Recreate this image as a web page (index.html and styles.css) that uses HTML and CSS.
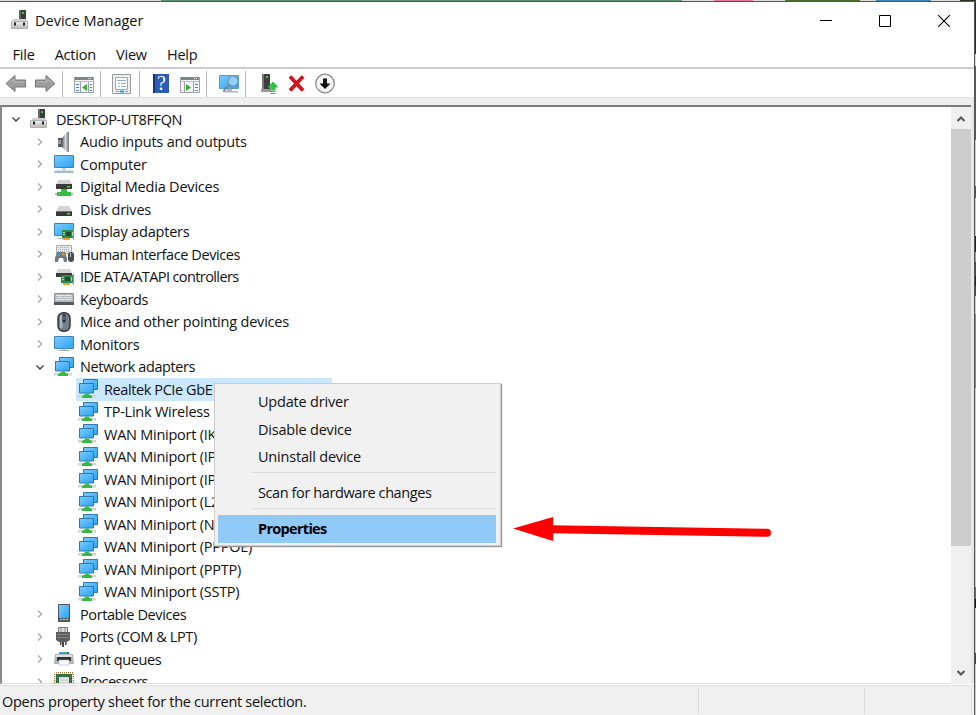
FILE: index.html
```
<!DOCTYPE html>
<html lang="en">

<head>
    <meta charset="UTF-8">
    <title>Device Manager</title>
    <link rel="stylesheet" href="styles.css">
</head>

<body>
    <!-- icon set -->
    <svg class="defs" width="0" height="0">
        <defs>
            <linearGradient id="blue" x1="0" y1="0" x2="1" y2="1">
                <stop offset="0" stop-color="#7ccbff" />
                <stop offset="1" stop-color="#2ba3f5" />
            </linearGradient>
            <linearGradient id="grey" x1="0" y1="0" x2="0" y2="1">
                <stop offset="0" stop-color="#eeeeee" />
                <stop offset="1" stop-color="#b9b9b9" />
            </linearGradient>
            <linearGradient id="metal" x1="0" y1="0" x2="1" y2="0">
                <stop offset="0" stop-color="#606468" />
                <stop offset=".5" stop-color="#d6d9dc" />
                <stop offset="1" stop-color="#74787c" />
            </linearGradient>
        </defs>
        <symbol id="i-root" viewBox="0 0 20 20">
            <path d="M9 0h7v10H9z" fill="#3c3c3c" />
            <path d="M9 0h2v10H9z" fill="#666" />
            <path d="M12 2h2v2h-2z" fill="#35d435" />
            <path d="M4 9h12l2 3H2z" fill="#d0d0d0" />
            <path d="M1.500 11.500h16v7h-16z" fill="url(#grey)" stroke="#b0b0b0" />
            <path d="M4 12.500h2v3H4zM13 12.500h2v3h-2z" fill="#222" />
        </symbol>
        <symbol id="i-audio" viewBox="0 0 20 20">
            <path d="M4 6h4v9H4z" fill="#55585c" />
            <path d="M8 6l5-6h2v20h-2l-5-5z" fill="url(#metal)" />
            <path d="M4 8h3v4H4z" fill="#95989b" />
        </symbol>
        <symbol id="i-computer" viewBox="0 0 20 20">
            <path d="M.500 1.500h19v12H.500z" fill="url(#blue)" stroke="#3f86b5" />
            <path d="M8 14h4v2H8z" fill="#c9d4dc" />
            <path d="M1 16h18l1 3H0z" fill="#a5bccc" />
            <path d="M1 16h18v1H1z" fill="#d4e0e8" />
        </symbol>
        <symbol id="i-media" viewBox="0 0 20 20">
            <path d="M4 3h12l2 4H2z" fill="#d4d4d4" />
            <path d="M2 7h16v5H2z" fill="#3b3b3b" />
            <path d="M13 9h3v1.500h-3z" fill="#3fe03f" />
            <path d="M7 12h6v3h4v4H3v-4h4z" fill="#39bd45" />
            <path d="M1 16h2v2H1zM17 16h2v2h-2z" fill="#b9bdb9" />
        </symbol>
        <symbol id="i-disk" viewBox="0 0 20 20">
            <path d="M5 7h10l3 5H2z" fill="#d6d6d6" />
            <path d="M2 12h16v5H2z" fill="#393939" />
            <path d="M2 12h16v1H2z" fill="#777" />
            <path d="M13 14h3v1.500h-3z" fill="#3fe03f" />
        </symbol>
        <symbol id="i-display" viewBox="0 0 20 20">
            <path d="M.500 1.500h19v12H.500z" fill="url(#blue)" stroke="#3f86b5" />
            <path d="M4 16h5v1H4z" fill="#a5bccc" />
            <path d="M8 8h12v8H8z" fill="#2f8a50" />
            <path d="M12 10h5v4h-5z" fill="#1d5032" />
            <path d="M9 10h2v1H9zM9 12h2v1H9zM18 10h1v4h-1z" fill="#a8d8a0" />
            <path d="M9 16h7v2H9z" fill="#f2a51c" />
            <path d="M19 7h1v11h-1z" fill="#9a9a9a" />
        </symbol>
        <symbol id="i-hid" viewBox="0 0 20 20">
            <path d="M2.500 1.500h15v8h-15z" fill="#e4e6e8" stroke="#a8adb1" />
            <path d="M4 3.500h12M4 5.500h12M4 7.500h12" stroke="#a8aeb3" stroke-dasharray="1 1" />
            <path d="M3 8h8l2 6v4h-3l-1-4H5l-1 4H1v-4z" fill="#737a80" />
            <path d="M3 10h2v2H3z" fill="#2ba3ff" />
            <path d="M8 9h2.500v2.500H8z" fill="#f08a24" />
            <rect x="14" y="8" width="6" height="10" rx="3" fill="#474c51" />
            <path d="M16.500 9v4" stroke="#b7c0c7" />
        </symbol>
        <symbol id="i-ide" viewBox="0 0 20 20">
            <path d="M4 2h12l2 4H2z" fill="#d6d6d6" />
            <path d="M2 6h16v4H2z" fill="#3b3b3b" />
            <path d="M7 8h12v8H7z" fill="#2f8a50" />
            <path d="M11 10h5v4h-5z" fill="#1d5032" />
            <path d="M8 10h2v1H8zM8 12h2v1H8zM17 10h1v4h-1z" fill="#a8d8a0" />
            <path d="M9 16h7v2H9z" fill="#f2a51c" />
            <path d="M19 7h1v11h-1z" fill="#9a9a9a" />
        </symbol>
        <symbol id="i-keyboard" viewBox="0 0 20 20">
            <path d="M.500 4.500h19v9H.500z" fill="#b4b8bc" stroke="#8a8e92" />
            <path d="M2 6.500h16M3 8.500h15M2 10.500h16" stroke="#fff" stroke-dasharray="1.500 .8" />
            <path d="M0 13h20v3H0z" fill="#55595e" />
        </symbol>
        <symbol id="i-mouse" viewBox="0 0 20 20">
            <rect x="4" y=".700" width="12" height="18.600" rx="5.500" fill="#75808b" stroke="#2d3136" stroke-width="1.400" />
            <rect x="6" y="3" width="2.500" height="13" rx="1.200" fill="#a9b5c1" />
            <rect x="8.500" y="2.500" width="3" height="8" rx="1" fill="#26292d" />
            <path d="M10 4v4" stroke="#8c98a5" />
        </symbol>
        <symbol id="i-monitor" viewBox="0 0 20 20">
            <path d="M.500 2.500h19v12H.500z" fill="url(#blue)" stroke="#3f86b5" />
            <path d="M8 15h4v1H8z" fill="#c9d2d8" />
            <path d="M5 16h10v1H5z" fill="#9aa9b3" />
        </symbol>
        <symbol id="i-net" viewBox="0 0 20 20">
            <path d="M5.500.500h14v10h-14z" fill="url(#blue)" stroke="#2f78a8" />
            <path d="M1.500 4.500h14v9.500h-14z" fill="url(#blue)" stroke="#2f78a8" />
            <path d="M0 16h18v2.500H0z" fill="#d3d5d3" />
            <path d="M7 14.500h4v1l3 1.500v2H4v-2l3-1.500z" fill="#35b944" />
        </symbol>
        <symbol id="i-portable" viewBox="0 0 20 20">
            <path d="M4.500.500h11v17h-11z" fill="#565d66" stroke="#4c545c" />
            <path d="M5 1h10v13H5z" fill="url(#blue)" />
            <path d="M6 15.500h8" stroke="#c5cbd0" stroke-dasharray="2 1" />
        </symbol>
        <symbol id="i-port" viewBox="0 0 20 20">
            <path d="M4.500.500h9v5h-9z" fill="#dedede" stroke="#777" />
            <path d="M7 1v4M11 1v4" stroke="#8a8a8a" />
            <path d="M2 5h14v8l-3 2H5l-3-2z" fill="#5e5e5e" />
            <path d="M3 7.500h12M3 10.500h12" stroke="#858585" />
            <path d="M6 15h1.500v3H6zM8 15h2v5H8zM11 15h1.500v3H11z" fill="#444" />
        </symbol>
        <symbol id="i-print" viewBox="0 0 20 20">
            <path d="M5 3h10v3H5z" fill="#3c9de0" />
            <path d="M9 3h3v3H9z" fill="#39bd45" />
            <path d="M13 3h2v3h-2z" fill="#1f64b8" />
            <path d="M1 5h18l1 10H0z" fill="#b3b6b9" />
            <path d="M2 6h16v2H2z" fill="#e0e2e3" />
            <path d="M3 8h14v4H3z" fill="#303234" />
            <path d="M5 11h10v5H5z" fill="#fff" stroke="#aaa" stroke-width=".600" />
        </symbol>
        <symbol id="i-cpu" viewBox="0 0 20 20">
            <path d="M2 .700h17M.700 2v17M19.300 2v17" stroke="#a67e3c" stroke-width="1.400" stroke-dasharray="1 1" />
            <path d="M2 2h16v17H2z" fill="#35704c" />
            <path d="M5 5h10v14H5z" fill="#d9dddd" />
        </symbol>
    </svg>

    <div class="desktop">
        <div class="strip-top"></div>
        <div class="window">
            <div class="titlebar">
                <svg class="icon"><use href="#i-root" /></svg>
                <span class="title">Device Manager</span>
                <div class="controls">
                    <svg width="14" height="14"><path d="M1 6.500h12" stroke="#000" /></svg>
                    <svg width="14" height="14"><path d="M1.500 1.500h11v11h-11z" fill="none" stroke="#000" /></svg>
                    <svg width="14" height="14"><path d="M1.200 1.200l11.600 11.600M12.800 1.200L1.200 12.800" stroke="#000" stroke-width="1.100" /></svg>
                </div>
            </div>

            <div class="menubar">
                <span>File</span>
                <span>Action</span>
                <span>View</span>
                <span>Help</span>
            </div>

            <div class="toolbar">
                <svg class="tool" viewBox="0 0 22 22">
                    <path d="M1 10.500l9-8v4.500h10.500v7H10v4.500z" fill="#9c9c9c" stroke="#777" />
                    <path d="M4 10l5-4v3h10" fill="none" stroke="#bbb" />
                </svg>
                <svg class="tool" viewBox="0 0 22 22">
                    <path d="M21 10.500l-9-8v4.500H1.500v7H12v4.500z" fill="#9c9c9c" stroke="#777" />
                    <path d="M3 9h10V6l5 4" fill="none" stroke="#bbb" />
                </svg>
                <span class="sep"></span>
                <svg class="tool" viewBox="0 0 22 22">
                    <path d="M1.500 4.500h19v15h-19z" fill="#f6f6f6" stroke="#9ba1a7" />
                    <path d="M2 4h18v3H2z" fill="#7d858c" />
                    <path d="M15 5.500h4" stroke="#fff" stroke-dasharray="1 1" />
                    <path d="M2 8.500h18" stroke="#bbc0c4" />
                    <path d="M7.500 9v10M15.500 9v10" stroke="#9ba1a7" />
                    <path d="M3 11.500h3M3 14.500h3M3 17.500h3M17 11.500h2M17 14.500h2M17 17.500h2" stroke="#5682aa" />
                    <path d="M14 11v7l-5-3.500z" fill="#3dae3d" />
                </svg>
                <span class="sep"></span>
                <svg class="tool" viewBox="0 0 22 22">
                    <path d="M1.500 1.500h18v19h-18z" fill="#f0f0f0" stroke="#9a9a9a" />
                    <path d="M4.500 4.500h12v12h-12z" fill="#fff" stroke="#9ca8b2" />
                    <path d="M6 7.500h9M7 10.500h2M10 10.500h5M7 13.500h2M10 13.500h5" stroke="#8cb4d4" />
                    <path d="M5 18.500h3M14 18.500h3" stroke="#999" />
                    <path d="M9 18.500h4" stroke="#2a9be6" stroke-width="2" />
                </svg>
                <span class="sep"></span>
                <svg class="tool" viewBox="0 0 22 22">
                    <path d="M3 1h16v19H3z" fill="#2b5cb8" />
                    <path d="M3 1h2v19H3z" fill="#17356f" />
                    <text class="help-mark" x="7" y="17">?</text>
                </svg>
                <svg class="tool" viewBox="0 0 22 22">
                    <path d="M1.500 4.500h19v15h-19z" fill="#f6f6f6" stroke="#9ba1a7" />
                    <path d="M2 4h18v3H2z" fill="#7d858c" />
                    <path d="M15 5.500h4" stroke="#fff" stroke-dasharray="1 1" />
                    <path d="M2 8.500h18" stroke="#bbc0c4" />
                    <path d="M5.500 9v10M14.500 9v10" stroke="#9ba1a7" />
                    <path d="M16 11.500h3M16 14.500h3M16 17.500h3" stroke="#5682aa" />
                    <path d="M7 11v7l5-3.500z" fill="#3dae3d" />
                </svg>
                <span class="sep"></span>
                <svg class="tool" viewBox="0 0 22 22">
                    <path d="M2.500 2.500h19v13h-19z" fill="url(#blue)" stroke="#5c9cc5" />
                    <path d="M10 16h5v2h-5zM6 18h15v1.500H6z" fill="#a9b9c5" />
                    <circle cx="16" cy="8" r="5" fill="#8fd2fb" stroke="#7898ad" stroke-width="1.300" />
                    <path d="M12.500 12l-6 6" stroke="#70889a" stroke-width="2" />
                </svg>
                <span class="sep"></span>
                <div class="tool-group">
                    <svg class="tool" viewBox="0 0 22 22">
                        <path d="M4 1h8v15H4z" fill="#3d3d3d" />
                        <path d="M4 1h2v15H4z" fill="#777" />
                        <path d="M8 3h2v2H8z" fill="#37d137" />
                        <path d="M3 16h10v3H3z" fill="#999" />
                        <path d="M9.500 14.500l5.500-6 5.500 6h-3v3h-5v-3zM12.500 18h5v1h-5zM12.500 20h5v1h-5z" fill="#2ac43a" />
                    </svg>
                    <svg class="tool" viewBox="0 0 22 22">
                        <path d="M4 3.500l13 14M17 3.500l-13 14" stroke="#d9121c" stroke-width="3.800" />
                    </svg>
                    <svg class="tool" viewBox="0 0 22 22">
                        <circle cx="11" cy="10.500" r="9.300" fill="#f7f7f7" stroke="#8a8a8a" stroke-width="1.300" />
                        <path d="M9 5.500h4v5h3.500L11 16l-5.500-5.500H9z" fill="#111" />
                    </svg>
                </div>
            </div>

            <div class="content">
                <div class="tree">
                    <div class="row root"><svg class="chev open"><path d="M1.500 3.500L5 7l3.500-3.500" /></svg><svg class="icon"><use href="#i-root" /></svg><span class="snug">DESKTOP-UT8FFQN</span></div>
                    <div class="row"><svg class="chev"><path d="M3 1.500L6.500 5 3 8.500" /></svg><svg class="icon"><use href="#i-audio" /></svg><span>Audio inputs and outputs</span></div>
                    <div class="row"><svg class="chev"><path d="M3 1.500L6.500 5 3 8.500" /></svg><svg class="icon"><use href="#i-computer" /></svg><span>Computer</span></div>
                    <div class="row"><svg class="chev"><path d="M3 1.500L6.500 5 3 8.500" /></svg><svg class="icon"><use href="#i-media" /></svg><span>Digital Media Devices</span></div>
                    <div class="row"><svg class="chev"><path d="M3 1.500L6.500 5 3 8.500" /></svg><svg class="icon"><use href="#i-disk" /></svg><span>Disk drives</span></div>
                    <div class="row"><svg class="chev"><path d="M3 1.500L6.500 5 3 8.500" /></svg><svg class="icon"><use href="#i-display" /></svg><span>Display adapters</span></div>
                    <div class="row"><svg class="chev"><path d="M3 1.500L6.500 5 3 8.500" /></svg><svg class="icon"><use href="#i-hid" /></svg><span class="snug">Human Interface Devices</span></div>
                    <div class="row"><svg class="chev"><path d="M3 1.500L6.500 5 3 8.500" /></svg><svg class="icon"><use href="#i-ide" /></svg><span class="tight">IDE ATA/ATAPI controllers</span></div>
                    <div class="row"><svg class="chev"><path d="M3 1.500L6.500 5 3 8.500" /></svg><svg class="icon"><use href="#i-keyboard" /></svg><span class="snug">Keyboards</span></div>
                    <div class="row"><svg class="chev"><path d="M3 1.500L6.500 5 3 8.500" /></svg><svg class="icon"><use href="#i-mouse" /></svg><span>Mice and other pointing devices</span></div>
                    <div class="row"><svg class="chev"><path d="M3 1.500L6.500 5 3 8.500" /></svg><svg class="icon"><use href="#i-monitor" /></svg><span>Monitors</span></div>
                    <div class="row"><svg class="chev open"><path d="M1.500 3.500L5 7l3.500-3.500" /></svg><svg class="icon"><use href="#i-net" /></svg><span class="snug">Network adapters</span></div>
                    <div class="row child selected"><svg class="icon"><use href="#i-net" /></svg><span class="snug">Realtek PCIe GbE</span></div>
                    <div class="row child"><svg class="icon"><use href="#i-net" /></svg><span>TP-Link Wireless U</span></div>
                    <div class="row child"><svg class="icon"><use href="#i-net" /></svg><span>WAN Miniport (IK</span></div>
                    <div class="row child"><svg class="icon"><use href="#i-net" /></svg><span>WAN Miniport (IP</span></div>
                    <div class="row child"><svg class="icon"><use href="#i-net" /></svg><span>WAN Miniport (IP</span></div>
                    <div class="row child"><svg class="icon"><use href="#i-net" /></svg><span>WAN Miniport (L2</span></div>
                    <div class="row child"><svg class="icon"><use href="#i-net" /></svg><span>WAN Miniport (N</span></div>
                    <div class="row child"><svg class="icon"><use href="#i-net" /></svg><span>WAN Miniport (PPPOE)</span></div>
                    <div class="row child"><svg class="icon"><use href="#i-net" /></svg><span>WAN Miniport (PPTP)</span></div>
                    <div class="row child"><svg class="icon"><use href="#i-net" /></svg><span>WAN Miniport (SSTP)</span></div>
                    <div class="row"><svg class="chev"><path d="M3 1.500L6.500 5 3 8.500" /></svg><svg class="icon"><use href="#i-portable" /></svg><span class="snug">Portable Devices</span></div>
                    <div class="row"><svg class="chev"><path d="M3 1.500L6.500 5 3 8.500" /></svg><svg class="icon"><use href="#i-port" /></svg><span class="snug">Ports (COM &amp; LPT)</span></div>
                    <div class="row"><svg class="chev"><path d="M3 1.500L6.500 5 3 8.500" /></svg><svg class="icon"><use href="#i-print" /></svg><span class="snug">Print queues</span></div>
                    <div class="row"><svg class="chev"><path d="M3 1.500L6.500 5 3 8.500" /></svg><svg class="icon"><use href="#i-cpu" /></svg><span class="tight">Processors</span></div>
                </div>
                <div class="scrollbar">
                    <svg width="10" height="10"><path d="M1.500 7l3.500-3.500L8.500 7" /></svg>
                    <div class="thumb"></div>
                    <svg class="down" width="10" height="10"><path d="M1.500 3l3.500 3.500L8.500 3" /></svg>
                </div>
            </div>

            <div class="statusbar">
                <span class="status-text">Opens property sheet for the current selection.</span>
                <span class="status-mid"></span>
                <span class="status-end"></span>
            </div>
        </div>

        <div class="strip-right"></div>

        <div class="context-menu">
            <div class="item">Update driver</div>
            <div class="item">Disable device</div>
            <div class="item">Uninstall device</div>
            <div class="line"></div>
            <div class="item snug">Scan for hardware changes</div>
            <div class="line"></div>
            <div class="item active">Properties</div>
        </div>

        <svg class="arrow" width="264" height="34" viewBox="0 0 264 34">
            <path d="M0 14.500L40 3v24z" fill="#f00" />
            <path d="M38 15.200L254 18.800" stroke="#f00" stroke-width="8" stroke-linecap="round" />
        </svg>
    </div>
</body>

</html>
```
FILE: styles.css
```
html,
body {
    margin: 0;
    height: 100%;
    overflow: hidden;
}

body {
    font-family: "Open Sans", "Noto Sans", sans-serif;
    font-size: 14.5px;
    letter-spacing: -0.2px;
    color: #111;
}

.defs {
    position: absolute;
}

.snug {
    letter-spacing: -0.4px;
}

.tight {
    letter-spacing: -0.6px;
}

.desktop {
    position: relative;
    display: grid;
    grid-template: 2px 713px / 974px 2px;
    width: 976px;
    height: 715px;
}

.strip-top {
    grid-column: 1 / 3;
    box-sizing: border-box;
    border-bottom: 1px solid #555;
    background: linear-gradient(90deg, #ddd 161px, #5c9670 161px 682px, #ddd 682px 714px, #e27a9a 714px 753px, #ddd 753px 785px, #476f2a 785px 860px, #ddd 860px 876px, #4085b0 876px 931px, #ddd 931px 960px, #28351f 960px);
}

.strip-right {
    box-sizing: border-box;
    border-left: 1px solid #555;
    background: linear-gradient(#28351f 52px, #ddd 52px 64px, #785040 64px 138px, #ccc 138px 184px, #555 184px 196px, #ccc 196px 234px, #222 234px 250px, #c99a35 250px 260px, #a3221c 260px 274px, #26282d 274px 284px, #a3221c 284px 294px, #ccc 294px 312px, #96897a 312px 386px, #ccc 386px 585px, #a05c35 585px 597px, #111 597px 606px, #ccc 606px 651px, #444 651px 662px, #ccc 662px);
}

.window {
    display: flex;
    flex-direction: column;
    background: #fff;
    overflow: hidden;
}

.icon {
    width: 20px;
    height: 20px;
    flex: none;
}

.titlebar {
    display: flex;
    align-items: center;
    box-sizing: border-box;
    height: 37px;
    padding: 0 23px 1px 10px;
}

.title {
    margin-left: 5px;
    letter-spacing: 0;
}

.controls {
    display: flex;
    gap: 45px;
    margin-left: auto;
    padding-top: 2px;
}

.menubar {
    display: flex;
    align-items: center;
    gap: 20px;
    box-sizing: border-box;
    height: 28px;
    padding: 2px 12.5px 0;
}

.toolbar {
    display: flex;
    align-items: center;
    gap: 7px;
    box-sizing: border-box;
    height: 31px;
    padding: 1px 5px 0;
    border-top: 2px solid #cdcdcd;
    border-bottom: 1px solid #e2e2e2;
}

.tool {
    width: 22px;
    height: 22px;
    flex: none;
}

.sep {
    width: 1px;
    height: 26px;
    margin: 0 3px 0 -1.5px;
    background: #b5b5b5;
}

.tool-group {
    display: flex;
    gap: 6px;
    margin-left: 2px;
}

.help-mark {
    font: 20px "Liberation Serif", serif;
    fill: #fff;
}

.content {
    display: flex;
    box-sizing: border-box;
    height: 586px;
    border-top: 7px solid #efefef;
    border-right: 3px solid #e8e8e8;
}

.tree {
    flex: 1;
    box-sizing: border-box;
    height: 579px;
    padding-top: 1px;
    border-top: 2px solid #7b7b7b;
    border-left: 2px solid #8a8a8a;
    border-bottom: 1px solid #ddd;
    overflow: hidden;
}

.row {
    display: flex;
    align-items: center;
    height: 22.5px;
    padding-left: 33px;
    white-space: nowrap;
}

.row span {
    margin-left: 6px;
}

.row.root {
    padding-left: 9px;
}

.row.root .icon {
    margin-left: -1px;
}

.row.root span {
    margin-left: 7px;
}

.row.child {
    margin-left: 74px;
    padding-left: 2px;
}

.row.child span {
    letter-spacing: -0.25px;
}

.row.selected {
    width: 254px;
    background: #cce8ff;
}

.row.selected span {
    letter-spacing: -0.4px;
}

.chev {
    width: 10px;
    height: 10px;
    margin-right: 9px;
    fill: none;
    stroke: #a6a6a6;
    stroke-width: 1.3;
}

.chev.open {
    stroke: #444;
    stroke-width: 1.5;
}

.scrollbar {
    display: flex;
    flex-direction: column;
    align-items: center;
    box-sizing: border-box;
    width: 20px;
    height: 579px;
    padding: 7px 0 6px;
    border-top: 2px solid #7b7b7b;
    background: #f0f0f0;
}

.scrollbar svg {
    fill: none;
    stroke: #555;
    stroke-width: 2;
}

.thumb {
    width: 20px;
    height: 417px;
    margin-top: 5px;
    background: #cdcdcd;
}

.scrollbar .down {
    margin-top: auto;
}

.statusbar {
    display: flex;
    flex: 1;
    margin-top: 1px;
    border-top: 1px solid #e2e2e2;
    background: #f0f0f0;
}

.statusbar span {
    box-sizing: border-box;
    height: 26px;
    margin-top: 2px;
    border-right: 1px solid #dcdcdc;
}

.status-text {
    width: 699px;
    padding: 4px 2px;
    letter-spacing: -0.3px;
}

.status-mid {
    width: 166px;
}

.status-end {
    width: 107px;
}

.context-menu {
    position: absolute;
    left: 214px;
    top: 383px;
    box-sizing: border-box;
    width: 287px;
    height: 163px;
    padding: 4px 4px 0 3px;
    border: 1px solid #ccc;
    background: #f1f1f1;
    box-shadow: 1px 1px 1px #999;
}

.item {
    height: 27.5px;
    padding-left: 40px;
    line-height: 27.5px;
}

.item.active {
    background: #91c9f7;
    color: #000;
    font-weight: bold;
    letter-spacing: -0.7px;
}

.line {
    height: 1px;
    margin: 1.5px 0 6px 35px;
    background: #dadada;
}

.arrow {
    position: absolute;
    left: 513px;
    top: 514px;
}
```
